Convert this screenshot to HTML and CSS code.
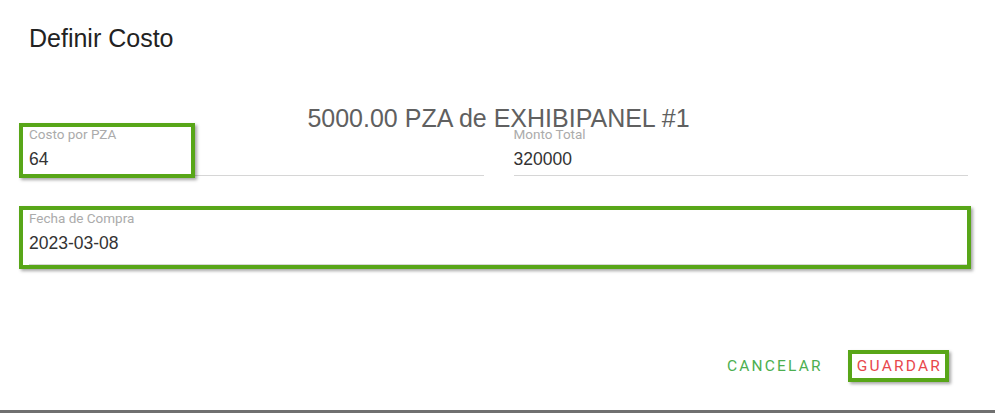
FILE: index.html
```html
<!DOCTYPE html>
<html lang="es">
<head>
<meta charset="utf-8">
<title>Definir Costo</title>
<link rel="stylesheet" href="styles.css">
</head>
<body>
<div class="dialog">
  <h2 class="title">Definir Costo</h2>
  <div class="content">
    <div class="subtitle">5000.00 PZA de EXHIBIPANEL #1</div>
    <div class="row">
      <div class="field">
        <span class="label">Costo por PZA</span>
        <span class="value">64</span>
      </div>
      <div class="field">
        <span class="label">Monto Total</span>
        <span class="value">320000</span>
      </div>
    </div>
    <div class="field field-date">
      <span class="label">Fecha de Compra</span>
      <span class="value">2023-03-08</span>
    </div>
  </div>
  <div class="actions">
    <button class="btn btn-cancel">CANCELAR</button>
    <button class="btn btn-save">GUARDAR</button>
  </div>
  <div class="mark mark-cost"></div>
  <div class="mark mark-date"></div>
  <div class="mark mark-save"></div>
</div>
<div class="edge"></div>
</body>
</html>
```
FILE: styles.css
```css
* { box-sizing: border-box; }
html, body { margin: 0; padding: 0; }
body {
  width: 995px;
  height: 413px;
  overflow: hidden;
  background: #fff;
  font-family: Roboto, "Liberation Sans", Arial, sans-serif;
}
.dialog {
  position: relative;
  height: 410px;
  background: #fff;
  display: flex;
  flex-direction: column;
}
.title {
  margin: 0;
  padding: 22px 0 0 29px;
  font-family: "Liberation Sans", Arial, sans-serif;
  font-size: 25px;
  line-height: 32px;
  font-weight: 400;
  color: #222;
}
.content {
  padding: 0 27px 0 29px;
  display: flex;
  flex-direction: column;
}
.subtitle {
  margin-top: 54px;
  text-align: center;
  font-family: "Liberation Sans", Arial, sans-serif;
  font-size: 25px;
  line-height: 20px;
  color: #606060;
}
.row {
  display: flex;
  gap: 30px;
}
.row .field { flex: 1; }
.field {
  display: flex;
  flex-direction: column;
  gap: 7px;
  padding-bottom: 4px;
  border-bottom: 1px solid #d6d6d6;
}
.field-date {
  margin-top: 36px;
  padding-bottom: 9px;
}
.label {
  font-size: 13.5px;
  line-height: 12px;
  color: #ababab;
}
.value {
  font-family: "Liberation Sans", Arial, sans-serif;
  font-size: 17.5px;
  line-height: 24px;
  color: #333;
}
.actions {
  margin-top: auto;
  margin-bottom: 34px;
  display: flex;
  justify-content: flex-end;
  gap: 18px;
  padding-right: 45px;
}
.btn {
  background: none;
  border: 0;
  padding: 0 8px;
  font-family: inherit;
  font-size: 15.5px;
  line-height: 20px;
  letter-spacing: 2.2px;
}
.btn-cancel { color: #4caf50; }
.btn-save { color: #e8474c; }
.mark {
  position: absolute;
  border: 4px solid #58a618;
  box-shadow: 2px 2px 3px rgba(0, 0, 0, 0.35);
}
.mark-cost { left: 19px; top: 123px; width: 176px; height: 55px; }
.mark-date { left: 19px; top: 206px; width: 952px; height: 63px; }
.mark-save { left: 848px; top: 350px; width: 101px; height: 32px; }
.edge {
  height: 3px;
  background: #707070;
}
```
